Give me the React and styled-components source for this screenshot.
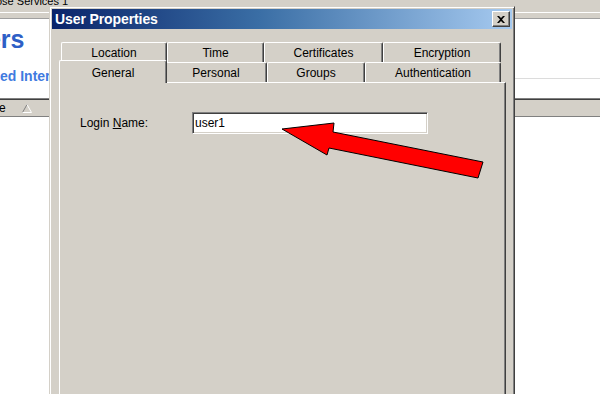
import React from "react";
import styled, { createGlobalStyle } from "styled-components";

const GlobalStyle = createGlobalStyle`
  html, body {
    margin: 0;
    padding: 0;
    overflow: hidden;
    background: #ffffff;
  }
  body {
    font-family: "Liberation Sans", Arial, sans-serif;
  }
`;

const Desktop = styled.div`
  position: relative;
  width: 600px;
  height: 394px;
  overflow: hidden;
  background: #ffffff;
`;

/* ---------- window behind the dialog ---------- */

const BackWindow = styled.div`
  display: flex;
  flex-direction: column;
  height: 100%;
`;

const MenuStrip = styled.div`
  height: 12px;
  overflow: hidden;
  background: #d4d0c8;
  border-bottom: 1px solid #ffffff;
  font-size: 11px;
  line-height: 11px;
  color: #000;
  & span {
    display: block;
    margin: -4px 0 0 -4px;
    white-space: nowrap;
  }
`;

const ToolStrip = styled.div`
  height: 5px;
  background: #d4d0c8;
  border-bottom: 1px solid #a0a0a0;
`;

const Banner = styled.div`
  height: 79px;
  display: flex;
  flex-direction: column;
  background: #ffffff;
`;

const BigHeading = styled.div`
  margin-top: 5px;
  margin-left: -45px;
  font-size: 25px;
  font-weight: 700;
  line-height: 30px;
  color: #2e5fc6;
  white-space: nowrap;
`;

const SubRow = styled.div`
  margin-top: 14px;
  display: flex;
  align-items: center;
  gap: 12px;
`;

const SubHeading = styled.div`
  font-size: 14px;
  font-weight: 700;
  line-height: 17px;
  color: #3f7be0;
  white-space: nowrap;
`;

const Rule = styled.div`
  flex: 1;
  height: 1px;
  margin-top: 4px;
  background: #dcdcdc;
`;

const ColumnHeader = styled.div`
  height: 18px;
  display: flex;
  align-items: center;
  gap: 16px;
  background: #d4d0c8;
  border-top: 1px solid #808080;
  box-shadow: inset 0 1px 0 #404040, inset 0 -1px 0 #808080;
  font-size: 12px;
  color: #000;
  & span {
    margin-left: -1px;
  }
`;

const ListArea = styled.div`
  flex: 1;
  background: #ffffff;
`;

/* ---------- dialog ---------- */

const Dialog = styled.div`
  position: absolute;
  z-index: 5;
  left: 49px;
  top: 6px;
  width: 466px;
  height: 410px;
  box-sizing: border-box;
  padding: 1px;
  background: #d4d0c8;
  border: 1px solid;
  border-color: #d4d0c8 #404040 #404040 #d4d0c8;
  box-shadow: inset 1px 1px 0 #ffffff, inset -1px -1px 0 #808080;
  display: flex;
  flex-direction: column;
`;

const TitleBar = styled.div`
  height: 20px;
  margin: 1px 1px 0 1px;
  display: flex;
  align-items: center;
  justify-content: space-between;
  padding: 0 2px 0 3px;
  background: linear-gradient(to right, #0a246a 0%, #3a6ea5 45%, #a6caf0 100%);
`;

const Title = styled.span`
  font-size: 14px;
  font-weight: 700;
  color: #ffffff;
  letter-spacing: -0.1px;
`;

const CloseButton = styled.div`
  width: 18px;
  height: 16px;
  box-sizing: border-box;
  display: flex;
  align-items: center;
  justify-content: center;
  background: #d4d0c8;
  border: 1px solid;
  border-color: #ffffff #404040 #404040 #ffffff;
  box-shadow: inset -1px -1px 0 #808080;
`;

const DialogBody = styled.div`
  padding: 13px 7px 0 8px;
  flex: 1;
  display: flex;
  flex-direction: column;
`;

const TabRow = styled.div`
  position: relative;
  z-index: ${(p) => (p.$front ? 2 : 1)};
  height: 20px;
  display: flex;
  padding-left: 2px;
`;

const Tab = styled.div`
  position: relative;
  width: ${(p) => p.$w}px;
  height: ${(p) => (p.$active ? 23 : 20)}px;
  margin: ${(p) => (p.$active ? "-2px -2px 0 -2px" : "0")};
  padding-top: ${(p) => (p.$active ? 5 : 3)}px;
  box-sizing: border-box;
  z-index: ${(p) => (p.$active ? 3 : 1)};
  background: #d4d0c8;
  border-top: 1px solid #ffffff;
  border-left: 1px solid #ffffff;
  border-right: 1px solid #404040;
  border-radius: 2px 2px 0 0;
  box-shadow: inset -1px 0 0 #808080;
  text-align: center;
  font-size: 12px;
  line-height: 14px;
  color: #000;
`;

const Panel = styled.div`
  flex: 1;
  position: relative;
  z-index: 1;
  padding: 29px 20px 0 20px;
  background: #d4d0c8;
  border-top: 1px solid #ffffff;
  border-left: 1px solid #ffffff;
  border-right: 1px solid #404040;
  box-shadow: inset -1px 0 0 #808080;
`;

const FieldRow = styled.div`
  display: flex;
  align-items: center;
`;

const Label = styled.label`
  width: 112px;
  font-size: 12px;
  color: #000;
  & u {
    text-decoration: underline;
    text-underline-offset: 1px;
  }
`;

const TextBox = styled.div`
  width: 236px;
  height: 22px;
  box-sizing: border-box;
  padding: 3px 0 0 2px;
  background: #ffffff;
  border: 1px solid;
  border-color: #808080 #ffffff #ffffff #808080;
  box-shadow: inset 1px 1px 0 #404040, inset -1px -1px 0 #d4d0c8;
  font-size: 12px;
  line-height: 14px;
  color: #000;
`;

const Overlay = styled.svg`
  position: absolute;
  z-index: 10;
  left: 0;
  top: 0;
  pointer-events: none;
`;

const backTabs = [
  { label: "Location", w: 106 },
  { label: "Time", w: 97 },
  { label: "Certificates", w: 119 },
  { label: "Encryption", w: 118 },
];

const frontTabs = [
  { label: "General", w: 104, active: true },
  { label: "Personal", w: 102 },
  { label: "Groups", w: 98 },
  { label: "Authentication", w: 136 },
];

const App = () => {
  return (
    <>
      <GlobalStyle />
      <Desktop>
        <BackWindow>
          <MenuStrip>
            <span>ose Services 1</span>
          </MenuStrip>
          <ToolStrip />
          <Banner>
            <BigHeading>Users</BigHeading>
            <SubRow>
              <SubHeading>ed Internet Services</SubHeading>
              <Rule />
            </SubRow>
          </Banner>
          <ColumnHeader>
            <span>e</span>
            <svg width="10" height="9" viewBox="0 0 10 9">
              <polyline points="0.5,8.5 5,0.5" fill="none" stroke="#808080" />
              <polyline points="5,0.5 9.5,8.5 0.5,8.5" fill="none" stroke="#ffffff" />
            </svg>
          </ColumnHeader>
          <ListArea />
        </BackWindow>

        <Dialog>
          <TitleBar>
            <Title>User Properties</Title>
            <CloseButton>
              <svg width="8" height="7" viewBox="0 0 8 7">
                <path d="M0 0 L2 0 L4 2 L6 0 L8 0 L5 3.5 L8 7 L6 7 L4 5 L2 7 L0 7 L3 3.5 Z" fill="#000" />
              </svg>
            </CloseButton>
          </TitleBar>
          <DialogBody>
            <TabRow>
              {backTabs.map((t) => (
                <Tab key={t.label} $w={t.w}>
                  {t.label}
                </Tab>
              ))}
            </TabRow>
            <TabRow $front>
              {frontTabs.map((t) => (
                <Tab key={t.label} $w={t.active ? t.w + 4 : t.w} $active={t.active}>
                  {t.label}
                </Tab>
              ))}
            </TabRow>
            <Panel>
              <FieldRow>
                <Label>
                  Login <u>N</u>ame:
                </Label>
                <TextBox>user1</TextBox>
              </FieldRow>
            </Panel>
          </DialogBody>
        </Dialog>

        <Overlay width="600" height="394" viewBox="0 0 600 394">
          <polygon
            points="282,129 334,123 333,132 483,162 478,178 329,148 327,155"
            fill="#ff0000"
            stroke="#000000"
            strokeWidth="1"
            strokeLinejoin="miter"
          />
        </Overlay>
      </Desktop>
    </>
  );
};

export default App;
